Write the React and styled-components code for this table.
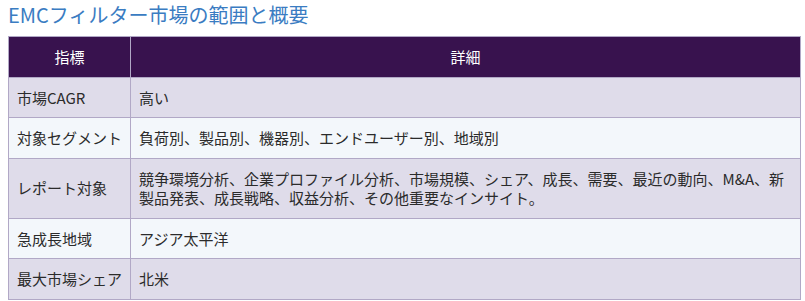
import React from "react";
import styled, { createGlobalStyle } from "styled-components";

const GlobalStyle = createGlobalStyle`
  body {
    margin: 0;
    padding: 0 8px;
    background: #ffffff;
    font-family: "Noto Sans CJK JP", "Noto Sans", sans-serif;
  }
`;

const Title = styled.h2`
  margin: 0 0 7px;
  font-size: 20px;
  line-height: 29px;
  font-weight: 400;
  color: #3a7cc2;
`;

const Table = styled.table`
  width: 793px;
  table-layout: fixed;
  border-collapse: collapse;
  font-size: 15px;
  line-height: 1.3;
  color: #2b2b2b;
`;

const HeadCell = styled.th`
  box-sizing: border-box;
  background: #38124e;
  color: #ffffff;
  font-weight: 400;
  text-align: center;
  padding: 10px 8px;
  border: 1px solid #b1a8c6;
  width: ${(p) => p.$w || "auto"};
`;

const Row = styled.tr`
  background: ${(p) => (p.$alt ? "#f3f7fb" : "#dfdcea")};
`;

const Cell = styled.td`
  padding: 10px 8px;
  border: 1px solid #b1a8c6;
  vertical-align: middle;
  white-space: ${(p) => (p.$nowrap ? "nowrap" : "normal")};
`;

const rows = [
  ["市場CAGR", "高い"],
  ["対象セグメント", "負荷別、製品別、機器別、エンドユーザー別、地域別"],
  [
    "レポート対象",
    "競争環境分析、企業プロファイル分析、市場規模、シェア、成長、需要、最近の動向、M&A、新製品発表、成長戦略、収益分析、その他重要なインサイト。",
  ],
  ["急成長地域", "アジア太平洋"],
  ["最大市場シェア", "北米"],
];

export default function App() {
  return (
    <>
      <GlobalStyle />
      <Title>EMCフィルター市場の範囲と概要</Title>
      <Table>
        <thead>
          <tr>
            <HeadCell $w="122px">指標</HeadCell>
            <HeadCell>詳細</HeadCell>
          </tr>
        </thead>
        <tbody>
          {rows.map((r, i) => (
            <Row key={r[0]} $alt={i % 2 === 1}>
              <Cell $nowrap>{r[0]}</Cell>
              <Cell>{r[1]}</Cell>
            </Row>
          ))}
        </tbody>
      </Table>
    </>
  );
}
